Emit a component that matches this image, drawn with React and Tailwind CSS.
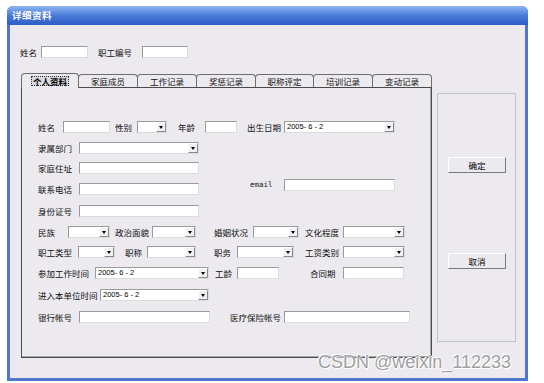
import React from "react";

// sunken white edit box
const Box = ({ w, children }) => (
  <div
    className={`shrink-0 h-[12px] bg-white border border-t-[#9a9a9a] border-l-[#9a9a9a] border-b-[#dcdcdc] border-r-[#dcdcdc] flex items-center ${w}`}
  >
    {children}
  </div>
);

// combo box with the little drop button
const Combo = ({ w, value }) => (
  <Box w={w}>
    <span className="flex-1 pl-[2px] text-[7.5px] leading-none text-black font-['Liberation_Sans',sans-serif] whitespace-pre">
      {value}
    </span>
    <span className="shrink-0 w-[10px] h-[10px] flex items-center justify-center bg-[#f1f0f3] border border-t-white border-l-white border-b-[#8a8a8a] border-r-[#8a8a8a]">
      <span className="w-0 h-0 border-l-[2.5px] border-r-[2.5px] border-t-[3px] border-l-transparent border-r-transparent border-t-black" />
    </span>
  </Box>
);

const L = ({ w, ml = "", children }) => (
  <span className={`shrink-0 ${w} ${ml} text-[8.5px] leading-none text-[#111] whitespace-nowrap`}>
    {children}
  </span>
);

const tabs = ["家庭成员", "工作记录", "奖惩记录", "职称评定", "培训记录", "变动记录"];
const tabWidths = ["w-[60px]", "w-[60px]", "w-[60px]", "w-[59px]", "w-[60px]", "w-[60px]"];

const App = () => {
  return (
    <div className="relative w-[544px] h-[383px] bg-white pt-[6px] pl-[7px] font-['Noto_Sans_CJK_SC','Noto_Sans',sans-serif]">
      {/* window */}
      <div className="w-[521px] h-[375px] flex flex-col rounded-t-[6px] bg-[#4f77cf] overflow-hidden">
        {/* title bar */}
        <div className="h-[19px] shrink-0 flex items-center pl-[5px] bg-gradient-to-b from-[#8db5f2] via-[#4a7ad8] to-[#2e5cc4]">
          <span className="text-white text-[9.5px] font-bold leading-none tracking-[0.5px]">详细资料</span>
        </div>

        {/* client */}
        <div className="flex-1 mx-[3px] mb-[3px] bg-[#eceaef] flex flex-col">
          {/* top fields */}
          <div className="flex items-center h-[12px] mt-[21px] pl-[10px]">
            <L w="w-[21px]">姓名</L>
            <Box w="w-[47px]" />
            <L w="w-[44px]" ml="ml-[10px]">职工编号</L>
            <Box w="w-[46px]" />
          </div>

          <div className="flex mt-[15px]">
            {/* tab control */}
            <div className="ml-[11px] w-[411px] flex flex-col">
              <div className="flex h-[14px] items-end">
                <div className="w-[58px] h-[15px] relative top-[1px] z-10 flex items-center justify-center bg-[#eceaef] border border-b-0 border-[#6e6e6e] rounded-t-[4px]">
                  <span className="px-[1px] border border-dotted border-[#333] bg-[#dcdbe0] text-[8.5px] leading-none font-bold text-black">
                    个人资料
                  </span>
                </div>
                {tabs.map((t, i) => (
                  <div
                    key={t}
                    className={`${tabWidths[i]} h-[13px] flex items-center justify-center bg-[#eceaef] border border-b-0 border-[#6e6e6e] rounded-t-[4px] -ml-[1px]`}
                  >
                    <span className="text-[8.5px] leading-none text-[#111]">{t}</span>
                  </div>
                ))}
              </div>

              <div className="h-[271px] border border-[#4a4a4a] shadow-[inset_-1px_-1px_0_#a8a8a8] pl-[16px] flex flex-col">
                {/* row 1 */}
                <div className="flex items-center h-[12px] mt-[33px]">
                  <L w="w-[25px]">姓名</L>
                  <Box w="w-[47px]" />
                  <L w="w-[22px]" ml="ml-[5px]">性别</L>
                  <Combo w="w-[30px]" />
                  <L w="w-[27px]" ml="ml-[11px]">年龄</L>
                  <Box w="w-[32px]" />
                  <L w="w-[37px]" ml="ml-[10px]">出生日期</L>
                  <Combo w="w-[111px]" value="2005- 6 - 2" />
                </div>
                {/* row 2 */}
                <div className="flex items-center h-[12px] mt-[9px]">
                  <L w="w-[41px]">隶属部门</L>
                  <Combo w="w-[120px]" />
                </div>
                {/* row 3 */}
                <div className="flex items-center h-[12px] mt-[8px]">
                  <L w="w-[41px]">家庭住址</L>
                  <Box w="w-[120px]" />
                </div>
                {/* row 4 */}
                <div className="flex items-center h-[12px] mt-[9px]">
                  <L w="w-[41px]">联系电话</L>
                  <Box w="w-[120px]" />
                  <div className="flex items-center mb-[8px] ml-[51px]">
                    <span className="w-[34px] shrink-0 text-[7.5px] leading-none text-[#111] font-['DejaVu_Sans_Mono',monospace]">
                      email
                    </span>
                    <Box w="w-[111px]" />
                  </div>
                </div>
                {/* row 5 */}
                <div className="flex items-center h-[12px] mt-[10px]">
                  <L w="w-[41px]">身份证号</L>
                  <Box w="w-[120px]" />
                </div>
                {/* row 6 */}
                <div className="flex items-center h-[12px] mt-[9px]">
                  <L w="w-[30px]">民族</L>
                  <Combo w="w-[42px]" />
                  <L w="w-[37px]" ml="ml-[5px]">政治面貌</L>
                  <Combo w="w-[44px]" />
                  <L w="w-[39px]" ml="ml-[18px]">婚姻状况</L>
                  <Combo w="w-[46px]" />
                  <L w="w-[38px]" ml="ml-[6px]">文化程度</L>
                  <Combo w="w-[62px]" />
                </div>
                {/* row 7 */}
                <div className="flex items-center h-[12px] mt-[8px]">
                  <L w="w-[40px]">职工类型</L>
                  <Combo w="w-[37px]" />
                  <L w="w-[22px]" ml="ml-[10px]">职称</L>
                  <Combo w="w-[49px]" />
                  <L w="w-[23px]" ml="ml-[18px]">职务</L>
                  <Combo w="w-[57px]" />
                  <L w="w-[38px]" ml="ml-[11px]">工资类别</L>
                  <Combo w="w-[62px]" />
                </div>
                {/* row 8 */}
                <div className="flex items-center h-[12px] mt-[9px]">
                  <L w="w-[57px]">参加工作时间</L>
                  <Combo w="w-[114px]" value="2005- 6 - 2" />
                  <L w="w-[22px]" ml="ml-[6px]">工龄</L>
                  <Box w="w-[42px]" />
                  <L w="w-[33px]" ml="ml-[31px]">合同期</L>
                  <Box w="w-[61px]" />
                </div>
                {/* row 9 */}
                <div className="flex items-center h-[12px] mt-[10px]">
                  <L w="w-[62px]">进入本单位时间</L>
                  <Combo w="w-[109px]" value="2005- 6 - 2" />
                </div>
                {/* row 10 */}
                <div className="flex items-center h-[12px] mt-[10px]">
                  <L w="w-[41px]">银行帐号</L>
                  <Box w="w-[131px]" />
                  <L w="w-[54px]" ml="ml-[20px]">医疗保险帐号</L>
                  <Box w="w-[126px]" />
                </div>
              </div>
            </div>

            {/* button group */}
            <div className="ml-[5px] mt-[20px] w-[79px] h-[249px] border border-[#c4c4c8] flex flex-col items-center">
              <button className="mt-[63px] ml-[10px] self-start w-[58px] h-[16px] bg-[#eceaef] border border-t-white border-l-white border-b-[#7a7a7a] border-r-[#7a7a7a] text-[8.5px] leading-none text-black">
                确定
              </button>
              <button className="mt-[80px] ml-[10px] self-start w-[58px] h-[16px] bg-[#eceaef] border border-t-white border-l-white border-b-[#7a7a7a] border-r-[#7a7a7a] text-[8.5px] leading-none text-black">
                取消
              </button>
            </div>
          </div>
        </div>
      </div>

      {/* CSDN watermark */}
      <span className="absolute left-[318px] top-[353px] text-[18px] leading-none text-[#a0a0a0] font-['Liberation_Sans',sans-serif] [text-shadow:0_0_2px_#fff,1px_1px_0_#fff,-1px_-1px_0_#fff]">
        CSDN @weixin_112233
      </span>
    </div>
  );
};

export default App;
